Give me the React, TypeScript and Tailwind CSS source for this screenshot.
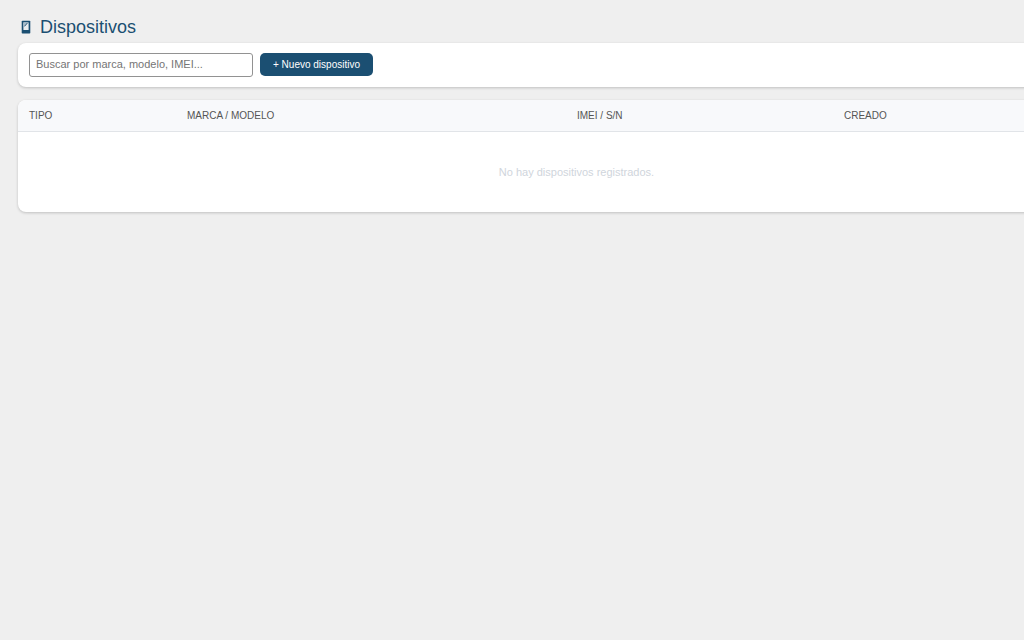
import React, { useState } from 'react';

interface Device {
  id: number;
  type: string;
  model: string;
  serial: string;
  created: string;
}

const DEVICES: Device[] = [];

const COLUMNS = [
  { key: 'type', label: 'Tipo', width: 'w-[158px]' },
  { key: 'model', label: 'Marca / Modelo', width: 'w-[390px]' },
  { key: 'serial', label: 'IMEI / S/N', width: 'w-[267px]' },
  { key: 'created', label: 'Creado', width: '' },
] as const;

function PhoneIcon() {
  return (
    <svg width="10" height="14" viewBox="0 0 10 14" aria-hidden="true">
      <rect x="0.7" y="0.7" width="8.6" height="12.8" rx="0.8" fill="#1b4f72" />
      <rect x="2.4" y="2.4" width="5.2" height="7.6" fill="#e9edf0" />
      <path d="M2.4 2.4h3.8L2.4 7z" fill="#a9bdcb" />
      <path d="M3.4 6.4L6.4 3" stroke="#1b4f72" strokeWidth="1" />
    </svg>
  );
}

export default function App() {
  const [query, setQuery] = useState('');
  const rows = DEVICES.filter(d =>
    `${d.model} ${d.serial}`.toLowerCase().includes(query.toLowerCase())
  );

  return (
    <div className="min-h-screen overflow-hidden bg-[#efefef] font-['Liberation_Sans',Arial,sans-serif]">
      <main className="min-w-[1153px] px-[18px] pt-[13px]">
        <h1 className="mb-[2px] flex h-7 items-center gap-[9px] pl-[3px] text-[18px] leading-6 text-[#1b4f72]">
          <PhoneIcon />
          Dispositivos
        </h1>

        <div className="mb-[13px] flex items-start gap-[7px] rounded-lg bg-white px-[11px] py-[10px] shadow-[0_1px_3px_rgba(0,0,0,0.2)]">
          <input
            type="text"
            aria-label="Buscar dispositivos"
            placeholder="Buscar por marca, modelo, IMEI..."
            value={query}
            onChange={e => setQuery(e.target.value)}
            className="h-6 w-56 rounded-[3px] border border-[#929292] bg-white px-[6px] pb-[2px] text-[11px] text-[#333333] placeholder:text-[#757575]"
          />
          <button
            type="button"
            className="h-[23px] rounded-[5px] bg-[#1b4f72] px-[13px] text-[10px] text-white"
          >
            + Nuevo dispositivo
          </button>
        </div>

        <div className="overflow-hidden rounded-lg bg-white shadow-[0_1px_3px_rgba(0,0,0,0.2)]">
          <table className="w-full table-fixed text-left">
            <thead className="bg-[#f8f9fb]">
              <tr className="border-b border-[#e1e4e8]">
                {COLUMNS.map(col => (
                  <th
                    key={col.key}
                    className={`h-[31px] px-[11px] text-[10px] font-normal text-[#555555] uppercase ${col.width}`}
                  >
                    {col.label}
                  </th>
                ))}
              </tr>
            </thead>
            <tbody>
              {rows.length === 0 ? (
                <tr>
                  <td colSpan={4} className="h-[81px] text-center text-[11px] text-[#cfd5dc]">
                    No hay dispositivos registrados.
                  </td>
                </tr>
              ) : (
                rows.map(row => (
                  <tr key={row.id}>
                    {COLUMNS.map(col => (
                      <td key={col.key} className="px-[11px] py-2 text-[11px]">
                        {row[col.key]}
                      </td>
                    ))}
                  </tr>
                ))
              )}
            </tbody>
          </table>
        </div>
      </main>
    </div>
  );
}
